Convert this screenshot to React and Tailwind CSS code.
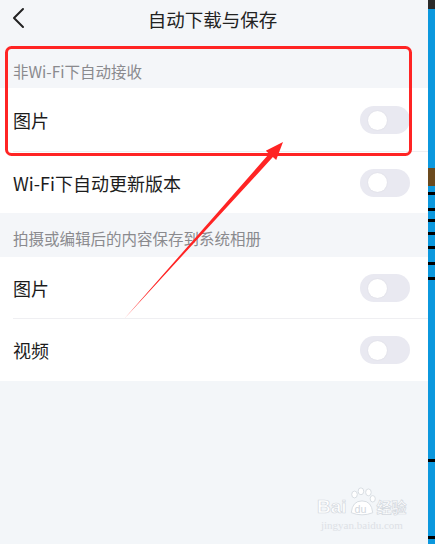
import React from 'react';

const font = { fontFamily: '"Noto Sans CJK SC", "Noto Sans", sans-serif' };

function Toggle() {
  return (
    <div className="relative w-[50px] h-[28px] rounded-full bg-[#e9e9f1]">
      <div className="absolute left-[8px] top-[4.5px] w-[19px] h-[19px] rounded-full bg-white shadow-[0_0_2px_rgba(0,0,0,0.08)]" />
    </div>
  );
}

function Row({ label, height, divider }) {
  return (
    <div className={`bg-white ${height}`}>
      <div className="h-full flex items-center justify-between pl-[13px] pr-[18px]">
        <span className="text-[18px] leading-[22px] text-[#1c1c1c]">{label}</span>
        <Toggle />
      </div>
      {divider && <div className="ml-[13px] h-px bg-[#efeff2] -mt-px relative" />}
    </div>
  );
}

function SectionHeader({ children, height, pb }) {
  return (
    <div className={`flex items-end pl-[13px] ${height} ${pb}`}>
      <span className="text-[15.5px] leading-[22px] text-[#8a8a8e]">{children}</span>
    </div>
  );
}

function Strip() {
  // bits of the window behind, on the right edge
  const bars = [
    [0, 9, 'bg-[#2a2a2a]'],
    [168, 18, 'bg-[#6b4a1e]'],
    [192, 3, 'bg-black'],
    [208, 3, 'bg-black'],
    [219, 3, 'bg-black'],
    [232, 3, 'bg-black'],
    [246, 3, 'bg-black'],
    [262, 3, 'bg-black'],
    [277, 3, 'bg-black'],
    [459, 3, 'bg-black'],
    [536, 3, 'bg-black'],
  ];
  let y = 0;
  return (
    <div className="w-[7px] bg-[#0b98de] flex flex-col">
      {bars.map(([top, h, c], i) => {
        const gap = top - y;
        y = top + h;
        return (
          <React.Fragment key={i}>
            <div style={{ height: gap }} />
            <div className={c} style={{ height: h }} />
          </React.Fragment>
        );
      })}
    </div>
  );
}

export default function App() {
  return (
    <div className="relative w-[435px] h-[544px] flex overflow-hidden" style={font}>
      <div className="w-[428px] bg-[#f4f6f9] flex flex-col">
        {/* nav bar */}
        <div className="relative h-[38px] flex items-center justify-center">
          <svg className="absolute left-0 top-0" width="40" height="38" viewBox="0 0 40 38">
            <path d="M23 9 L14 18 L23 27" fill="none" stroke="#222" strokeWidth="2" strokeLinecap="round" strokeLinejoin="round" />
          </svg>
          <span className="text-[18.5px] leading-[24px] text-[#222] ml-[-3px]">自动下载与保存</span>
        </div>

        <SectionHeader height="h-[50px]" pb="pb-[6px]">非Wi-Fi下自动接收</SectionHeader>
        <Row label="图片" height="h-[64px]" divider />
        <Row label="Wi-Fi下自动更新版本" height="h-[61px]" />

        <SectionHeader height="h-[44px]" pb="pb-[8px]">拍摄或编辑后的内容保存到系统相册</SectionHeader>
        <Row label="图片" height="h-[62px]" divider />
        <Row label="视频" height="h-[62px]" />

        <div className="flex-1 bg-[#f3f6f9]" />
      </div>
      <Strip />

      {/* watermark */}
      <div className="absolute left-[317px] top-[487px] flex flex-col items-start pointer-events-none">
        <div className="flex items-end gap-[1px]">
          <span className="text-[19px] leading-[20px] font-bold text-white [-webkit-text-stroke:0.7px_#d3d8de]" style={{ fontFamily: '"Liberation Sans", sans-serif' }}>Bai</span>
          <div className="relative w-[28px] h-[30px]">
            <svg width="28" height="30" viewBox="0 0 26 28" className="absolute inset-0">
              <g fill="white" stroke="#d3d8de" strokeWidth="0.8">
                <ellipse cx="6" cy="7" rx="2.6" ry="3.2" />
                <ellipse cx="12" cy="4" rx="2.6" ry="3.2" />
                <ellipse cx="19" cy="5" rx="2.6" ry="3.2" />
                <ellipse cx="23" cy="11" rx="2.4" ry="3" />
                <path d="M3 24 Q4 13 13 13 Q22 13 23 24 Q13 28 3 24 Z" />
              </g>
              <text x="6" y="24" fontSize="10" fill="#d3d8de" style={{ fontFamily: '"Liberation Sans", sans-serif' }}>du</text>
            </svg>
          </div>
          <span className="text-[15px] leading-[20px] font-bold text-white [-webkit-text-stroke:0.7px_#d3d8de]">经验</span>
        </div>
        <span className="mt-[3px] ml-[4px] text-[11px] leading-[11px] text-[#dde1e6]" style={{ fontFamily: '"Liberation Serif", serif' }}>jingyan.baidu.com</span>
      </div>

      {/* annotation */}
      <svg className="absolute inset-0 pointer-events-none" width="435" height="544" viewBox="0 0 435 544">
        <rect x="6.5" y="47.5" width="404" height="107" rx="5" fill="none" stroke="#ff2424" strokeWidth="3" />
        <polygon
          points="125,318 269.1,153.7 265.8,150.7 283,142 276.2,160.1 272.9,157.1"
          fill="#ff2424"
        />
      </svg>
    </div>
  );
}
